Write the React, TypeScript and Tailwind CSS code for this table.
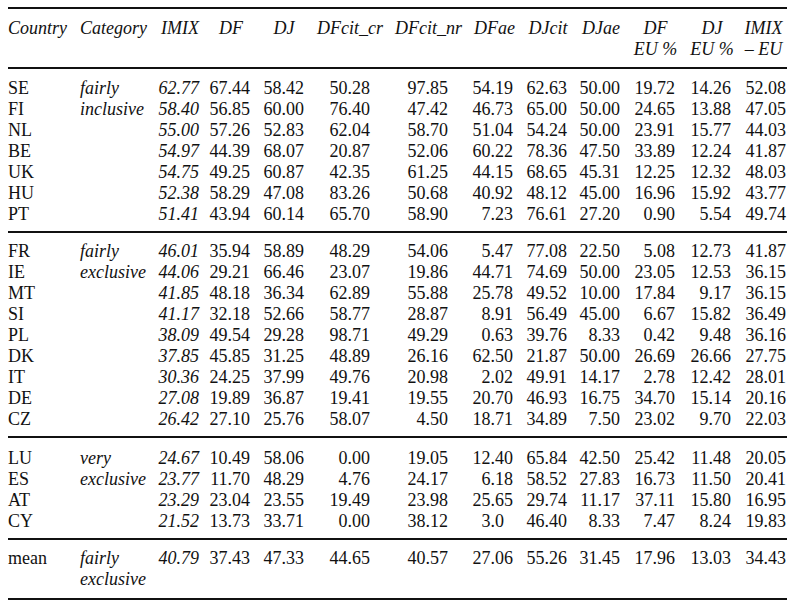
const cols = "grid grid-cols-[72px_75px_50px_52px_54px_78px_79px_53px_54px_52px_57px_56px_47px]";

const pads = [
    "pr-[6px] italic",
    "pr-[7px]",
    "pr-[7px]",
    "pr-[19px]",
    "pr-[20px]",
    "pr-[8px]",
    "pr-[8px]",
    "pr-[7px]",
    "pr-[9px]",
    "pr-[9px]",
    "pr-[1px]",
];

const headers = [
    ["IMIX"],
    ["DF"],
    ["DJ"],
    ["DFcit_cr"],
    ["DFcit_nr"],
    ["DFae"],
    ["DJcit"],
    ["DJae"],
    ["DF", "EU %"],
    ["DJ", "EU %"],
    ["IMIX", "– EU"],
];

type Row = [string, string, string[]];

const groups: { rows: Row[]; pad: string }[] = [
    {
        pad: "pt-[9px] pb-[6px]",
        rows: [
            ["SE", "fairly", ["62.77", "67.44", "58.42", "50.28", "97.85", "54.19", "62.63", "50.00", "19.72", "14.26", "52.08"]],
            ["FI", "inclusive", ["58.40", "56.85", "60.00", "76.40", "47.42", "46.73", "65.00", "50.00", "24.65", "13.88", "47.05"]],
            ["NL", "", ["55.00", "57.26", "52.83", "62.04", "58.70", "51.04", "54.24", "50.00", "23.91", "15.77", "44.03"]],
            ["BE", "", ["54.97", "44.39", "68.07", "20.87", "52.06", "60.22", "78.36", "47.50", "33.89", "12.24", "41.87"]],
            ["UK", "", ["54.75", "49.25", "60.87", "42.35", "61.25", "44.15", "68.65", "45.31", "12.25", "12.32", "48.03"]],
            ["HU", "", ["52.38", "58.29", "47.08", "83.26", "50.68", "40.92", "48.12", "45.00", "16.96", "15.92", "43.77"]],
            ["PT", "", ["51.41", "43.94", "60.14", "65.70", "58.90", "7.23", "76.61", "27.20", "0.90", "5.54", "49.74"]],
        ],
    },
    {
        pad: "pt-[8px] pb-[6px]",
        rows: [
            ["FR", "fairly", ["46.01", "35.94", "58.89", "48.29", "54.06", "5.47", "77.08", "22.50", "5.08", "12.73", "41.87"]],
            ["IE", "exclusive", ["44.06", "29.21", "66.46", "23.07", "19.86", "44.71", "74.69", "50.00", "23.05", "12.53", "36.15"]],
            ["MT", "", ["41.85", "48.18", "36.34", "62.89", "55.88", "25.78", "49.52", "10.00", "17.84", "9.17", "36.15"]],
            ["SI", "", ["41.17", "32.18", "52.66", "58.77", "28.87", "8.91", "56.49", "45.00", "6.67", "15.82", "36.49"]],
            ["PL", "", ["38.09", "49.54", "29.28", "98.71", "49.29", "0.63", "39.76", "8.33", "0.42", "9.48", "36.16"]],
            ["DK", "", ["37.85", "45.85", "31.25", "48.89", "26.16", "62.50", "21.87", "50.00", "26.69", "26.66", "27.75"]],
            ["IT", "", ["30.36", "24.25", "37.99", "49.76", "20.98", "2.02", "49.91", "14.17", "2.78", "12.42", "28.01"]],
            ["DE", "", ["27.08", "19.89", "36.87", "19.41", "19.55", "20.70", "46.93", "16.75", "34.70", "15.14", "20.16"]],
            ["CZ", "", ["26.42", "27.10", "25.76", "58.07", "4.50", "18.71", "34.89", "7.50", "23.02", "9.70", "22.03"]],
        ],
    },
    {
        pad: "pt-[10px] pb-[6px]",
        rows: [
            ["LU", "very", ["24.67", "10.49", "58.06", "0.00", "19.05", "12.40", "65.84", "42.50", "25.42", "11.48", "20.05"]],
            ["ES", "exclusive", ["23.77", "11.70", "48.29", "4.76", "24.17", "6.18", "58.52", "27.83", "16.73", "11.50", "20.41"]],
            ["AT", "", ["23.29", "23.04", "23.55", "19.49", "23.98", "25.65", "29.74", "11.17", "37.11", "15.80", "16.95"]],
            ["CY", "", ["21.52", "13.73", "33.71", "0.00", "38.12", "3.0", "46.40", "8.33", "7.47", "8.24", "19.83"]],
        ],
    },
    {
        pad: "pt-[8px] pb-[8px]",
        rows: [
            ["mean", "fairly", ["40.79", "37.43", "47.33", "44.65", "40.57", "27.06", "55.26", "31.45", "17.96", "13.03", "34.43"]],
            ["", "exclusive", ["", "", "", "", "", "", "", "", "", "", ""]],
        ],
    },
];

const Rule = () => <div className="h-[2px] bg-[#111]" />;

const App = () => {
    return (
        <div className="min-h-[606px] bg-white pt-[7px] font-['Liberation_Serif',serif] text-[18px] leading-[21px] text-[#111]">
            <div className="ml-[8px] w-[779px]">
                <Rule />
                <div className={`${cols} pt-[9px] pb-[7px] italic`}>
                    <div>Country</div>
                    <div>Category</div>
                    {headers.map((h, i) => (
                        <div key={i} className="flex flex-col items-center">
                            {h.map((line) => (
                                <div key={line} className="whitespace-nowrap">{line}</div>
                            ))}
                        </div>
                    ))}
                </div>
                {groups.map((g, gi) => (
                    <div key={gi}>
                        <Rule />
                        <div className={g.pad}>
                            {g.rows.map(([country, cat, vals], ri) => (
                                <div key={ri} className={cols}>
                                    <div>{country}</div>
                                    <div className="italic">{cat}</div>
                                    {vals.map((v, vi) => (
                                        <div key={vi} className={`text-right whitespace-nowrap ${pads[vi]}`}>
                                            {v}
                                            {v === "3.0" && <span className="invisible">0</span>}
                                        </div>
                                    ))}
                                </div>
                            ))}
                        </div>
                    </div>
                ))}
                <Rule />
            </div>
        </div>
    );
};

export default App;
